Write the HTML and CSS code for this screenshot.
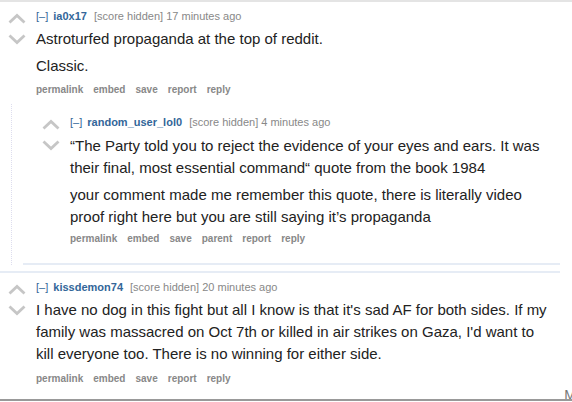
FILE: index.html
```html
<!DOCTYPE html>
<html>
<head>
<meta charset="utf-8">
<link rel="stylesheet" href="styles.css">
</head>
<body>
<div class="page">
  <div class="comment top">
    <div class="arrows">
      <svg class="arrow" width="18" height="11" viewBox="0 0 18 11"><path d="M1.5 9.5 L9 2.5 L16.5 9.5" /></svg>
      <svg class="arrow" width="18" height="11" viewBox="0 0 18 11"><path d="M1.5 1.5 L9 8.5 L16.5 1.5" /></svg>
    </div>
    <div class="entry">
      <p class="tagline"><span class="expand">[–]</span> <span class="author">ia0x17</span> <span class="meta">[score hidden] 17 minutes ago</span></p>
      <div class="md">
        <p>Astroturfed propaganda at the top of reddit.</p>
        <p>Classic.</p>
      </div>
      <ul class="buttons"><li>permalink</li><li>embed</li><li>save</li><li>report</li><li>reply</li></ul>
    </div>
  </div>
  <div class="child">
    <div class="comment nested">
      <div class="arrows">
        <svg class="arrow" width="18" height="11" viewBox="0 0 18 11"><path d="M1.5 9.5 L9 2.5 L16.5 9.5" /></svg>
        <svg class="arrow" width="18" height="11" viewBox="0 0 18 11"><path d="M1.5 1.5 L9 8.5 L16.5 1.5" /></svg>
      </div>
      <div class="entry">
        <p class="tagline"><span class="expand">[–]</span> <span class="author">random_user_lol0</span> <span class="meta">[score hidden] 4 minutes ago</span></p>
        <div class="md">
          <p>“The Party told you to reject the evidence of your eyes and ears. It was their final, most essential command“ quote from the book 1984</p>
          <p>your comment made me remember this quote, there is literally video proof right here but you are still saying it’s propaganda</p>
        </div>
        <ul class="buttons"><li>permalink</li><li>embed</li><li>save</li><li>parent</li><li>report</li><li>reply</li></ul>
      </div>
    </div>
  </div>
  <div class="comment top third">
    <div class="arrows">
      <svg class="arrow" width="18" height="11" viewBox="0 0 18 11"><path d="M1.5 9.5 L9 2.5 L16.5 9.5" /></svg>
      <svg class="arrow" width="18" height="11" viewBox="0 0 18 11"><path d="M1.5 1.5 L9 8.5 L16.5 1.5" /></svg>
    </div>
    <div class="entry">
      <p class="tagline"><span class="expand">[–]</span> <span class="author">kissdemon74</span> <span class="meta">[score hidden] 20 minutes ago</span></p>
      <div class="md">
        <p>I have no dog in this fight but all I know is that it's sad AF for both sides. If my family was massacred on Oct 7th or killed in air strikes on Gaza, I'd want to kill everyone too. There is no winning for either side.</p>
      </div>
      <ul class="buttons"><li>permalink</li><li>embed</li><li>save</li><li>report</li><li>reply</li></ul>
    </div>
  </div>
</div>
<div class="footer"><span class="more">M</span></div>
</body>
</html>
```
FILE: styles.css
```css
html, body {
  margin: 0;
  padding: 0;
  background: #fff;
}
body {
  font-family: "Liberation Sans", Arial, sans-serif;
  color: #222;
  border-top: 2px solid #e4e4e4;
  padding-top: 1px;
  height: 402px;
  box-sizing: border-box;
  overflow: hidden;
  position: relative;
}
.page {
  width: 560px;
}
.comment {
  display: flex;
}
.comment.top {
  padding-left: 8px;
  padding-top: 6px;
}
.arrows {
  display: flex;
  flex-direction: column;
  gap: 10px;
  width: 18px;
  margin-right: 10px;
  padding-top: 4px;
  flex-shrink: 0;
}
.arrow path {
  fill: none;
  stroke: #c6c6c6;
  stroke-width: 2.8;
}
.entry {
  flex: 1;
  min-width: 0;
  margin-right: 7px;
}
.tagline {
  margin: 0;
  font-size: 11px;
  line-height: 14px;
  color: #888;
}
.expand {
  color: #369;
  margin-right: 2px;
}
.author {
  color: #369;
  font-weight: bold;
  margin-right: 4px;
}
.md {
  margin-top: 5px;
  font-size: 15px;
  line-height: 21.7px;
}
.md p {
  margin: 0 0 5px 0;
}
.buttons {
  list-style: none;
  margin: 0;
  padding: 0;
  display: flex;
  gap: 10px;
  font-size: 10px;
  font-weight: bold;
  color: #888;
  line-height: 14px;
  margin-top: 7px;
}
.nested .buttons {
  margin-top: 4px;
}
.third .buttons {
  margin-top: 8px;
}
.child {
  margin-left: 11px;
  margin-top: 7px;
  border-left: 1px dotted #dde;
}
.comment.nested {
  margin-left: 11px;
  padding-left: 19px;
  padding-top: 11px;
  padding-bottom: 17px;
  border-bottom: 2px solid #e6ecf5;
}
.nested .md {
  margin-top: 6px;
}
.comment.third {
  margin-top: 6px;
  border-top: 2px solid #e6ecf5;
  padding-top: 7px;
}
.footer {
  position: absolute;
  left: 0;
  right: 0;
  bottom: 1px;
  height: 0;
  border-bottom: 2px solid #999;
}
.more {
  position: absolute;
  right: -4px;
  bottom: 0;
  font-size: 14px;
  line-height: 12px;
  height: 10px;
  overflow: hidden;
  color: #777;
}
```
